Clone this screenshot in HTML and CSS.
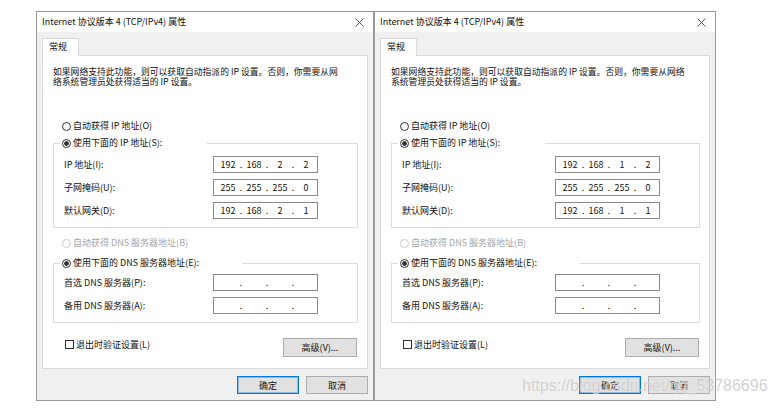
FILE: index.html
```html
<!DOCTYPE html>
<html lang="zh-CN">
<head>
    <meta charset="UTF-8">
    <meta name="viewport" content="width=device-width, initial-scale=1.0">
    <title>Internet 协议版本 4 (TCP/IPv4) 属性</title>
    <link rel="stylesheet" href="styles.css">
</head>
<body>
    <div class="screen">
        <!-- 第一台电脑：192.168.2.x -->
        <div class="dialog dialog-left">
            <div class="titlebar">
                <span>Internet 协议版本 4 (TCP/IPv4) 属性</span>
                <svg class="close" width="9" height="9" viewBox="0 0 9 9"><path d="M0.5 0.5L8.5 8.5M8.5 0.5L0.5 8.5" stroke="#444" stroke-width="0.9" fill="none"/></svg>
            </div>
            <div class="body">
                <div class="tabs"><span class="tab">常规</span></div>
                <div class="panel">
                    <div class="desc">
                        <span class="desc-line">如果网络支持此功能，则可以获取自动指派的 IP 设置。否则，你需要从网</span>
                        <span class="desc-line">络系统管理员处获得适当的 IP 设置。</span>
                    </div>
                    <div class="radio first"><span class="circle"></span>自动获得 IP 地址(O)</div>
                    <fieldset class="group group-ip">
                        <legend class="legend-ip"><span class="radio"><span class="circle checked"></span>使用下面的 IP 地址(S):</span></legend>
                        <div class="field"><span>IP 地址(I):</span><span class="ip"><span class="seg">192</span><span class="sep">.</span><span class="seg">168</span><span class="sep">.</span><span class="seg">2</span><span class="sep">.</span><span class="seg">2</span></span></div>
                        <div class="field"><span>子网掩码(U):</span><span class="ip"><span class="seg">255</span><span class="sep">.</span><span class="seg">255</span><span class="sep">.</span><span class="seg">255</span><span class="sep">.</span><span class="seg">0</span></span></div>
                        <div class="field"><span>默认网关(D):</span><span class="ip"><span class="seg">192</span><span class="sep">.</span><span class="seg">168</span><span class="sep">.</span><span class="seg">2</span><span class="sep">.</span><span class="seg">1</span></span></div>
                    </fieldset>
                    <div class="radio disabled"><span class="circle"></span>自动获得 DNS 服务器地址(B)</div>
                    <fieldset class="group group-dns">
                        <legend class="legend-dns"><span class="radio"><span class="circle checked"></span>使用下面的 DNS 服务器地址(E):</span></legend>
                        <div class="field"><span>首选 DNS 服务器(P):</span><span class="ip"><span class="seg"></span><span class="sep">.</span><span class="seg"></span><span class="sep">.</span><span class="seg"></span><span class="sep">.</span><span class="seg"></span></span></div>
                        <div class="field"><span>备用 DNS 服务器(A):</span><span class="ip"><span class="seg"></span><span class="sep">.</span><span class="seg"></span><span class="sep">.</span><span class="seg"></span><span class="sep">.</span><span class="seg"></span></span></div>
                    </fieldset>
                    <div class="options">
                        <div class="check"><span class="box"></span>退出时验证设置(L)</div>
                        <button class="btn btn-adv" type="button">高级(V)...</button>
                    </div>
                </div>
                <div class="actions">
                    <button class="btn btn-default" type="button">确定</button>
                    <button class="btn" type="button">取消</button>
                </div>
            </div>
        </div>

        <!-- 第二台电脑：192.168.1.x -->
        <div class="dialog dialog-right">
            <div class="titlebar">
                <span>Internet 协议版本 4 (TCP/IPv4) 属性</span>
                <svg class="close" width="9" height="9" viewBox="0 0 9 9"><path d="M0.5 0.5L8.5 8.5M8.5 0.5L0.5 8.5" stroke="#444" stroke-width="0.9" fill="none"/></svg>
            </div>
            <div class="body">
                <div class="tabs"><span class="tab">常规</span></div>
                <div class="panel">
                    <div class="desc">
                        <span class="desc-line">如果网络支持此功能，则可以获取自动指派的 IP 设置。否则，你需要从网络</span>
                        <span class="desc-line">系统管理员处获得适当的 IP 设置。</span>
                    </div>
                    <div class="radio first"><span class="circle"></span>自动获得 IP 地址(O)</div>
                    <fieldset class="group group-ip">
                        <legend class="legend-ip"><span class="radio"><span class="circle checked"></span>使用下面的 IP 地址(S):</span></legend>
                        <div class="field"><span>IP 地址(I):</span><span class="ip"><span class="seg">192</span><span class="sep">.</span><span class="seg">168</span><span class="sep">.</span><span class="seg">1</span><span class="sep">.</span><span class="seg">2</span></span></div>
                        <div class="field"><span>子网掩码(U):</span><span class="ip"><span class="seg">255</span><span class="sep">.</span><span class="seg">255</span><span class="sep">.</span><span class="seg">255</span><span class="sep">.</span><span class="seg">0</span></span></div>
                        <div class="field"><span>默认网关(D):</span><span class="ip"><span class="seg">192</span><span class="sep">.</span><span class="seg">168</span><span class="sep">.</span><span class="seg">1</span><span class="sep">.</span><span class="seg">1</span></span></div>
                    </fieldset>
                    <div class="radio disabled"><span class="circle"></span>自动获得 DNS 服务器地址(B)</div>
                    <fieldset class="group group-dns">
                        <legend class="legend-dns"><span class="radio"><span class="circle checked"></span>使用下面的 DNS 服务器地址(E):</span></legend>
                        <div class="field"><span>首选 DNS 服务器(P):</span><span class="ip"><span class="seg"></span><span class="sep">.</span><span class="seg"></span><span class="sep">.</span><span class="seg"></span><span class="sep">.</span><span class="seg"></span></span></div>
                        <div class="field"><span>备用 DNS 服务器(A):</span><span class="ip"><span class="seg"></span><span class="sep">.</span><span class="seg"></span><span class="sep">.</span><span class="seg"></span><span class="sep">.</span><span class="seg"></span></span></div>
                    </fieldset>
                    <div class="options">
                        <div class="check"><span class="box"></span>退出时验证设置(L)</div>
                        <button class="btn btn-adv" type="button">高级(V)...</button>
                    </div>
                </div>
                <div class="actions">
                    <button class="btn btn-default" type="button">确定</button>
                    <button class="btn" type="button">取消</button>
                </div>
            </div>
        </div>

        <span class="watermark">https://blog.csdn.net/qq_53786696</span>
    </div>
</body>
</html>
```

FILE: styles.css
```css
* {
    box-sizing: border-box;
}

body {
    margin: 0;
    background: #fff;
    color: #111;
    font-family: "Noto Sans CJK SC", sans-serif;
    font-size: 9px;
}

/* Área da captura */
.screen {
    position: relative;
    display: flex;
    width: 776px;
    height: 408px;
    padding: 11px 0 0 36px;
}

/* Janela */
.dialog {
    display: flex;
    flex-direction: column;
    height: 390px;
    border: 1px solid #9a9a9a;
    background: #f0f0f0;
}

.dialog-left {
    width: 338px;
}

.dialog-right {
    width: 342px;
}

.titlebar {
    display: flex;
    align-items: center;
    justify-content: space-between;
    height: 20px;
    padding: 0 9px 0 5px;
    background: #fff;
    line-height: 12px;
}

.close {
    display: block;
}

.body {
    flex: 1;
    display: flex;
    flex-direction: column;
    padding: 6px 5px 5px 5px;
}

/* Aba */
.tabs {
    display: flex;
}

.tab {
    position: relative;
    z-index: 1;
    width: 37px;
    height: 18px;
    margin-bottom: -1px;
    padding-left: 6px;
    border: 1px solid #d9d9d9;
    border-bottom: none;
    background: #fff;
    line-height: 16px;
}

.panel {
    display: flex;
    flex-direction: column;
    padding: 0 9px 11px 10px;
    border: 1px solid #d9d9d9;
    background: #fff;
}

.desc {
    display: flex;
    flex-direction: column;
    padding-top: 11px;
    font-size: 8.8px;
    white-space: nowrap;
}

.desc-line {
    height: 10px;
    line-height: 10px;
}

/* Botões de opção */
.radio {
    display: flex;
    align-items: center;
    height: 12px;
    line-height: 12px;
    white-space: nowrap;
}

.radio.first {
    margin: 33px 0 0 9px;
}

.radio.disabled {
    margin: 9px 0 0 9px;
    color: #a6a6a6;
}

.circle {
    flex: none;
    width: 9px;
    height: 9px;
    margin-right: 2px;
    border: 1px solid #333;
    border-radius: 50%;
    background: #fff;
}

.circle.checked {
    background: radial-gradient(circle, #333 0 2px, #fff 2.6px);
}

.disabled .circle {
    border-color: #c8c8c8;
}

/* Grupos */
.group {
    min-width: 0;
    margin: 5px 0 0;
    padding: 7px 39px 8px 10px;
    border: 1px solid #dcdcdc;
}

.group-dns {
    margin-top: 8px;
    padding-top: 5px;
}

legend {
    height: 12px;
    margin-left: -4px;
    padding: 0 0 0 2px;
    background: #fff;
}

.legend-ip {
    width: 147px;
}

.legend-dns {
    width: 182px;
}

.field {
    display: flex;
    align-items: center;
    justify-content: space-between;
    height: 17px;
    white-space: nowrap;
}

.field + .field {
    margin-top: 6px;
}

.ip {
    display: flex;
    align-items: center;
    width: 105px;
    height: 17px;
    padding-left: 3px;
    border: 1px solid #8a8a8a;
}

.seg {
    width: 22px;
    text-align: center;
}

.sep {
    width: 4px;
    text-align: center;
}

/* Rodapé do painel */
.options {
    display: flex;
    align-items: flex-start;
    justify-content: space-between;
    margin-top: 15px;
}

.check {
    display: flex;
    align-items: center;
    height: 12px;
    margin-left: 12px;
    white-space: nowrap;
}

.box {
    flex: none;
    width: 9px;
    height: 9px;
    margin-right: 2px;
    border: 1px solid #333;
    background: #fff;
}

.btn {
    height: 19px;
    padding: 0;
    border: 1px solid #adadad;
    background: #e1e1e1;
    color: #111;
    font: inherit;
}

.btn-adv {
    width: 74px;
    margin-right: 1px;
}

.actions {
    display: flex;
    justify-content: flex-end;
    gap: 7px;
    margin-top: 7px;
}

.actions .btn {
    width: 62px;
    height: 18px;
}

.btn-default {
    border-color: #0078d7;
    box-shadow: inset 0 0 0 1px rgba(0, 120, 215, 0.35);
}

/* Marca d'água */
.watermark {
    position: absolute;
    top: 377px;
    left: 522px;
    color: rgba(150, 150, 150, 0.45);
    font-family: "Liberation Sans", sans-serif;
    font-size: 16px;
    text-shadow: 0 0 1px #fff;
    white-space: nowrap;
}
```
